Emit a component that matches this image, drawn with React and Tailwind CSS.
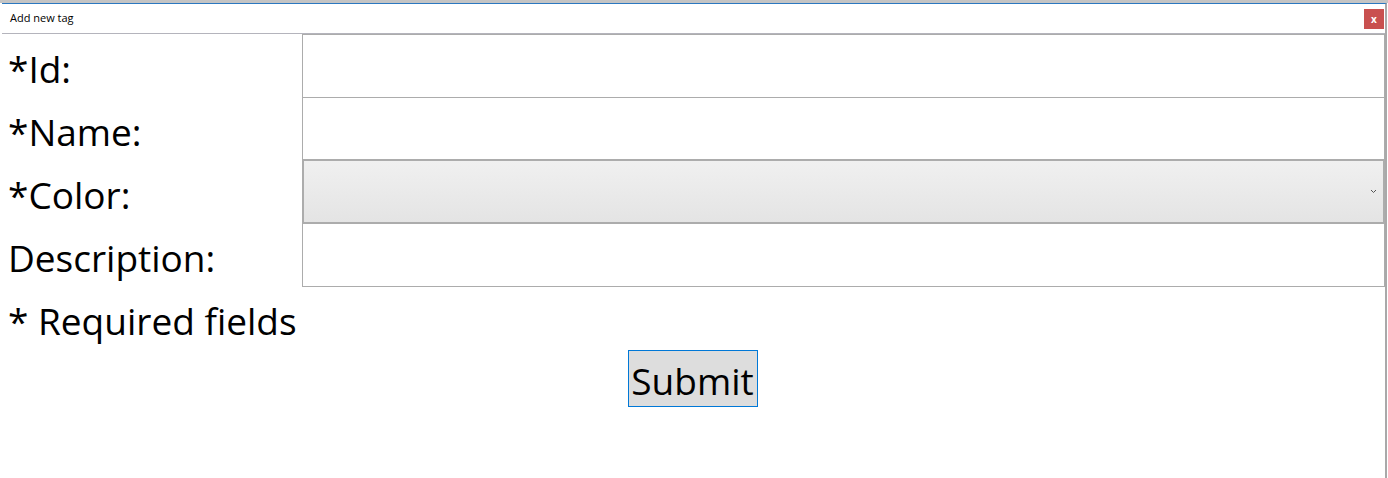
import React from "react";

const rowCls = "flex h-[63px] items-center";
const labelCls = "w-[300px] pl-[6px] pt-[5px] text-[37px] leading-none text-black";
const inputCls =
  "h-[64px] flex-1 border border-[#acacac] bg-white outline-none";

function App() {
  return (
    <div
      className="h-[478px] w-[1388px] overflow-hidden bg-white"
      style={{ fontFamily: '"Open Sans", "Noto Sans", sans-serif' }}
    >
      <div className="h-[3px] w-full bg-[#c4c4c4]" />
      <div className="ml-[2px] h-[475px] w-[1385px] border-t border-r-2 border-t-[#2b78c0] border-r-[#a9a9a9] bg-white">
        <div className="flex h-[30px] items-center justify-between border-b border-[#b4b4bc] pl-[8px] pr-[1px]">
          <span className="text-[11px] text-black">Add new tag</span>
          <button className="flex h-[20px] w-[20px] items-center justify-center bg-[#c9504f] text-[10px] font-bold leading-none text-white">
            x
          </button>
        </div>
        <form className="flex flex-col">
          <div className={rowCls}>
            <label className={labelCls}>*Id:</label>
            <input className={inputCls} />
          </div>
          <div className={rowCls}>
            <label className={labelCls}>*Name:</label>
            <input className={inputCls} />
          </div>
          <div className={rowCls}>
            <label className={labelCls}>*Color:</label>
            <div className="relative flex h-[65px] flex-1 items-center justify-end border-2 border-[#acacac] bg-gradient-to-b from-[#f0f0f0] to-[#e4e4e4] pr-[6px]">
              <svg width="7" height="5" viewBox="0 0 7 5">
                <path d="M1 1l2.5 2.5L6 1" fill="none" stroke="#555" strokeWidth="1" />
              </svg>
            </div>
          </div>
          <div className={rowCls}>
            <label className={labelCls}>Description:</label>
            <input className={inputCls} />
          </div>
          <div className="flex h-[64px] items-center">
            <span className="pl-[6px] pt-[5px] text-[37px] leading-none text-black">
              * Required fields
            </span>
          </div>
          <div className="flex justify-center pr-[2px]">
            <button
              type="button"
              className="h-[57px] w-[130px] border border-[#0078d7] bg-[#dddddd] pt-[4px] text-[37px] leading-none text-black"
            >
              Submit
            </button>
          </div>
        </form>
      </div>
    </div>
  );
}

export default App;
